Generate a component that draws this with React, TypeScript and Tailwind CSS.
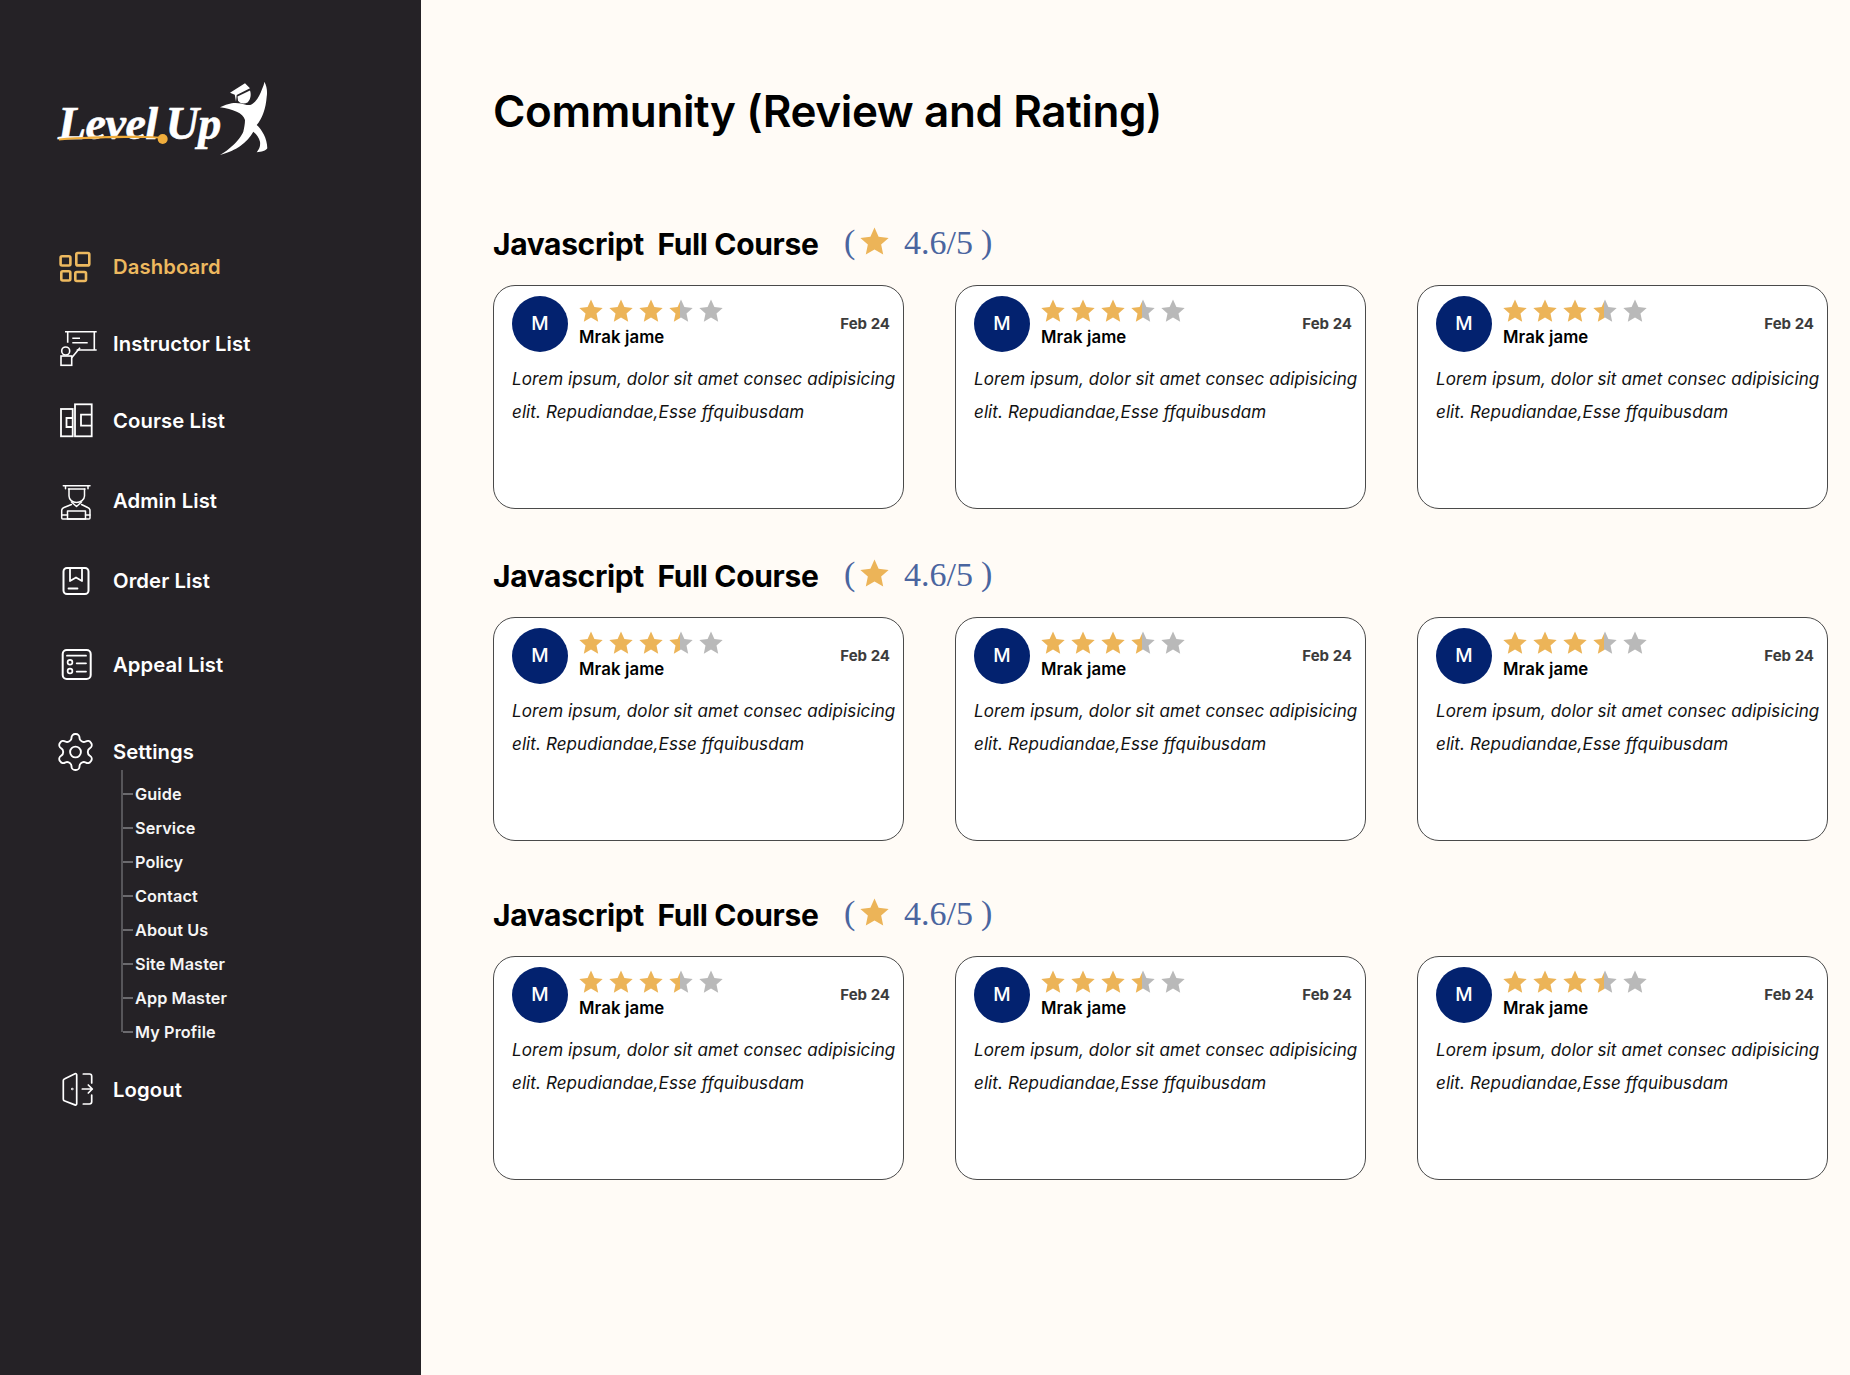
import { useId } from "react"

const sans = "font-['Inter','Noto_Sans',sans-serif]"

function Star({ fill = "#ecb458", size = 24 }: { fill?: string; size?: number }) {
  return (
    <svg width={size} height={size} viewBox="0 0 24 24" className="block shrink-0">
      <path fill={fill} d="M12 0.5l3.400 7.600 8.300.9-6.200 5.500 1.700 8.200L12 18.600l-7.200 4.100 1.700-8.200L.3 9l8.300-.9z" />
    </svg>
  )
}

function HalfStar() {
  const id = useId()
  return (
    <svg width={24} height={24} viewBox="0 0 24 24" className="block shrink-0">
      <defs>
        <linearGradient id={id} x1="0" x2="1" y1="0" y2="0">
          <stop offset="0.46" stopColor="#ecb458" />
          <stop offset="0.46" stopColor="#b9b9b9" />
        </linearGradient>
      </defs>
      <path fill={`url(#${id})`} d="M12 0.5l3.400 7.600 8.300.9-6.200 5.500 1.700 8.200L12 18.600l-7.200 4.100 1.700-8.200L.3 9l8.300-.9z" />
    </svg>
  )
}

function ReviewCard() {
  return (
    <div className="h-[224px] w-[411px] shrink-0 rounded-[22px] border border-[#4a4a4a] bg-white pl-[18px] pr-[2px] pt-[10px]">
      <div className="flex">
        <div className={`flex size-[56px] shrink-0 items-center justify-center rounded-full bg-[#03226f] text-[19px] font-medium text-white ${sans}`}>
          M
        </div>
        <div className="ml-[11px] pt-[3px]">
          <div className="flex gap-[6px]">
            <Star />
            <Star />
            <Star />
            <HalfStar />
            <Star fill="#b9b9b9" />
          </div>
          <p className={`mt-[4px] text-[16.800px] font-semibold leading-[20px] tracking-[0.1px] text-black ${sans}`}>Mrak jame</p>
        </div>
        <p className={`ml-auto mr-[11px] mt-[18px] text-[15px] font-bold leading-[20px] text-[#3c3c3c] ${sans}`}>Feb 24</p>
      </div>
      <p className={`mt-[11px] whitespace-nowrap text-[17px] italic leading-[33px] tracking-[0.1px] text-[#111] ${sans}`}>
        Lorem ipsum, dolor sit amet consec adipisicing
        <br />
        elit. Repudiandae,Esse ffquibusdam
      </p>
    </div>
  )
}

function CourseSection({ className }: { className: string }) {
  return (
    <section className={className}>
      <div className="flex h-[40px] items-center">
        <h2 className={`mt-[2px] w-[351px] text-[30px] font-bold tracking-[-0.35px] text-black ${sans}`}>Javascript&nbsp; Full Course</h2>
        <div className="flex items-center font-['Liberation_Serif',serif] text-[#4a659f]">
          <span className="-mt-[3px] w-[16px] text-[34px] leading-[40px]">(</span>
          <span className="-mt-[3px]">
            <Star fill="#ecb458" size={29} />
          </span>
          <span className="ml-[15px] text-[34px] leading-[40px]">4.6/5</span>
          <span className="-mt-[3px] ml-[8px] text-[34px] leading-[40px]">)</span>
        </div>
      </div>
      <div className="mt-[22px] flex gap-[51px]">
        <ReviewCard />
        <ReviewCard />
        <ReviewCard />
      </div>
    </section>
  )
}

function NavIcon({ name, color = "#fff" }: { name: string; color?: string }) {
  const common = { fill: "none", stroke: color, strokeWidth: 1.8, strokeLinecap: "round" as const, strokeLinejoin: "round" as const }
  return (
    <svg width={38} height={38} viewBox="0 0 38 38" className="-ml-[2px] block shrink-0 overflow-visible" {...common}>
      {name === "dashboard" && (
        <g strokeWidth="2.6">
          <rect x="3.600" y="8.300" width="9.800" height="9.200" rx="1.500" />
          <rect x="19.300" y="5" width="13" height="12.400" rx="1.500" />
          <rect x="4.300" y="23.300" width="9" height="9.200" rx="1.500" />
          <rect x="18.300" y="24" width="10.700" height="9" rx="1.500" />
        </g>
      )}
      {name === "instructor" && (
        <g strokeWidth="1.600" strokeLinecap="butt" strokeLinejoin="miter">
          <path d="M8 6.700h31.700M10.700 6.700v11M37.300 6.700V25M19.700 25h20" />
          <path d="M15.300 13.300H23M15.300 17.700h15.400" />
          <path d="M14.700 32.700L23 22.700" />
          <circle cx="8.700" cy="26" r="4" />
          <rect x="4" y="31" width="10.700" height="9.300" />
        </g>
      )}
      {name === "course" && (
        <g strokeWidth="1.800" strokeLinecap="butt" strokeLinejoin="miter">
          <rect x="4" y="7" width="11.700" height="27.300" />
          <rect x="18" y="2.300" width="16.700" height="32" />
          <path d="M15.700 16H9.500v9h6.200M34.700 12.700H24v11h10.700" />
        </g>
      )}
      {name === "admin" && (
        <g strokeWidth="1.500">
          <path d="M6.300 3.700H33M8.500 3.700v3M31 3.700v3M11.500 7h16.500" />
          <path d="M12 7v7c0 3.500 3.500 6.500 7.500 6.500s8-3 8-6.500V7" />
          <path d="M14.500 20l5 4.500 5-4.500" />
          <path d="M14.500 22.500l-7.500 3c-1.500.6-2.300 1.500-2.300 3V36c0 .8.500 1 1 1H32c.5 0 1-.2 1-1v-7.500c0-1.500-.7-2.400-2.300-3L24.500 22.500" />
          <path d="M10.500 29h18v8h-18z" />
          <path d="M4.700 33h5.800M28.500 33H33" />
        </g>
      )}
      {name === "order" && (
        <>
          <rect x="6.500" y="6" width="25" height="26" rx="3.500" strokeWidth="2" />
          <path d="M13 6v13l6-3.500 6 3.500V6M11.500 26.500h9" strokeWidth="1.800" />
        </>
      )}
      {name === "appeal" && (
        <>
          <rect x="5.700" y="4" width="28" height="29" rx="4" strokeWidth="2" />
          <path d="M10 9.700h19M19.700 17.300H29M19.700 25.600H29" strokeWidth="1.800" />
          <circle cx="13" cy="16.300" r="2.400" strokeWidth="1.700" />
          <circle cx="13" cy="25" r="2.400" strokeWidth="1.700" />
        </>
      )}
      {name === "settings" && (
        <g transform="translate(-3.100 -2.600) scale(1.8)" strokeWidth="1.050">
          <circle cx="12" cy="12" r="3" />
          <path d="M12.220 2h-.440a2 2 0 0 0-2 2v.180a2 2 0 0 1-1 1.730l-.430.250a2 2 0 0 1-2 0l-.150-.080a2 2 0 0 0-2.730.730l-.220.380a2 2 0 0 0 .730 2.730l.150.100a2 2 0 0 1 1 1.720v.510a2 2 0 0 1-1 1.740l-.150.090a2 2 0 0 0-.730 2.730l.220.380a2 2 0 0 0 2.730.730l.150-.080a2 2 0 0 1 2 0l.430.250a2 2 0 0 1 1 1.730V20a2 2 0 0 0 2 2h.440a2 2 0 0 0 2-2v-.180a2 2 0 0 1 1-1.730l.430-.250a2 2 0 0 1 2 0l.150.080a2 2 0 0 0 2.730-.730l.220-.390a2 2 0 0 0-.730-2.730l-.150-.080a2 2 0 0 1-1-1.740v-.500a2 2 0 0 1 1-1.740l.150-.090a2 2 0 0 0 .730-2.730l-.220-.380a2 2 0 0 0-2.730-.730l-.150.080a2 2 0 0 1-2 0l-.430-.250a2 2 0 0 1-1-1.730V4a2 2 0 0 0-2-2z" />
        </g>
      )}
      {name === "logout" && (
        <g strokeWidth="1.700">
          <path d="M6.300 9.500c0-1 .5-1.500 1.500-1.800L18 2.800c1-.4 1.700.2 1.700 1.200v28.500c0 1.200-.8 1.800-1.800 1.400L7.800 30c-1-.3-1.500-.8-1.500-1.800z" />
          <path d="M26.300 3h6.200c1.500 0 2.200.7 2.200 2.200V12M26.300 33h6.200c1.500 0 2.200-.7 2.200-2.200V24" />
          <path d="M25.300 18h10M31.300 14l4 4-4 4" />
          <circle cx="15.300" cy="18" r="0.400" />
        </g>
      )}
    </svg>
  )
}

function NavItem({ icon, label, className, active }: { icon: string; label: string; className: string; active?: boolean }) {
  return (
    <a className={`flex h-[38px] items-center ${className}`}>
      <NavIcon name={icon} color={active ? "#edb95f" : "#ffffff"} />
      <span className={`ml-[18px] text-[20.250px] font-semibold tracking-[0.1px] ${active ? "text-[#edb95f]" : "text-white"} ${sans}`}>{label}</span>
    </a>
  )
}

function Logo() {
  return (
    <div className="relative h-[80px] w-[212px]">
      <span className="absolute -left-[1px] top-[20px] whitespace-nowrap font-['Liberation_Serif',serif] text-[46px] font-bold italic leading-[52px] tracking-[-0.5px] text-white [-webkit-text-stroke:0.6px_white] [word-spacing:-3px]">
        Level Up
      </span>
      <svg width={212} height={80} viewBox="0 0 212 80" className="absolute left-0 top-0">
        <path d="M-1 60.500c30-2.500 72-3.800 102-1.800v1.800C71 59.500 30 60.500-1 62.500z" fill="#f0ad3c" />
        <circle cx="103.700" cy="61" r="5" fill="#f0ad3c" />
        {/* figure with cap */}
        <path fill="#fff" d="M171 14.700L186 5.300l5 5-13.300 6.700-.7 6.700-1.200-7z" />
        <path fill="#fff" d="M178.500 18.500l12.500-6c1.500 4 .5 9-2.500 12-3.500 2-8 1-9.500-2z" />
        <path fill="#fff" d="M205.300 3.700C208 8 208.500 14 207.700 18.700c-.5 6-1.400 11-3.400 16.600-1.600 4.500-3.800 8.500-6.600 11.700 5 4.500 10.500 13 10.600 23.300-1 2.500-6 3.500-10.600 4 3-3.500 3.800-6.500 3.300-10.600-1-4-3.500-7.600-6.700-10-2.800 5-7 10-13.300 14.600-5 3.500-11 6-20 8.700 5-3 9-6 13.300-10 4.500-4.200 8.500-9.600 10-13.300.8-3.500 1.700-7.700 1.700-11.700-1-3.500-4-6.500-8.300-8.300-5-2-10-3.500-16.700-4.400 4-1.700 8-3.400 11.700-4 5-.7 10 0 15 1.700 4 .5 6-1 8.300-3.300 3.500-3.700 5.700-8.700 6.700-11.700 1.200-3.300 2.500-5.500 2.600-8.300z" />
      </svg>
    </div>
  )
}

function SubMenu() {
  const items = ["Guide", "Service", "Policy", "Contact", "About Us", "Site Master", "App Master", "My Profile"]
  return (
    <div className="ml-[62px] mt-[-1px] w-[120px] border-l-2 border-[#57565a]">
      <div className="flex flex-col pt-[7px]">
        {items.map((item, i) => (
          <div key={item} className={`flex h-[34px] items-center ${i === items.length - 1 ? "-mb-[17px]" : ""}`}>
            <span className="h-[1.500px] w-[10px] bg-[#6b6a6e]" />
            <span className={`ml-[2px] text-[16.250px] font-semibold tracking-[0.1px] text-[#f5f5f5] ${sans}`}>{item}</span>
          </div>
        ))}
      </div>
    </div>
  )
}

export default function App() {
  return (
    <div className="flex h-[1375px] w-[1850px] overflow-hidden bg-[#fffbf6]">
      <aside className="w-[421px] shrink-0 bg-[#252226] pl-[59px] pt-[78px]">
        <Logo />
        <nav className="mt-[90px] flex flex-col">
          <NavItem icon="dashboard" label="Dashboard" className="" active />
          <NavItem icon="instructor" label="Instructor List" className="mt-[39px]" />
          <NavItem icon="course" label="Course List" className="mt-[39px]" />
          <NavItem icon="admin" label="Admin List" className="mt-[42px]" />
          <NavItem icon="order" label="Order List" className="mt-[42px]" />
          <NavItem icon="appeal" label="Appeal List" className="mt-[46px]" />
          <NavItem icon="settings" label="Settings" className="mt-[49px]" />
          <SubMenu />
          <NavItem icon="logout" label="Logout" className="mt-[39px]" />
        </nav>
      </aside>
      <main className="flex-1 pl-[72px]">
        <h1 className={`mt-[82px] h-[58px] text-[44px] font-semibold leading-[58px] tracking-[-0.4px] text-black ${sans}`}>
          Community (Review and Rating)
        </h1>
        <CourseSection className="mt-[83px]" />
        <CourseSection className="mt-[46px]" />
        <CourseSection className="mt-[53px]" />
      </main>
    </div>
  )
}
